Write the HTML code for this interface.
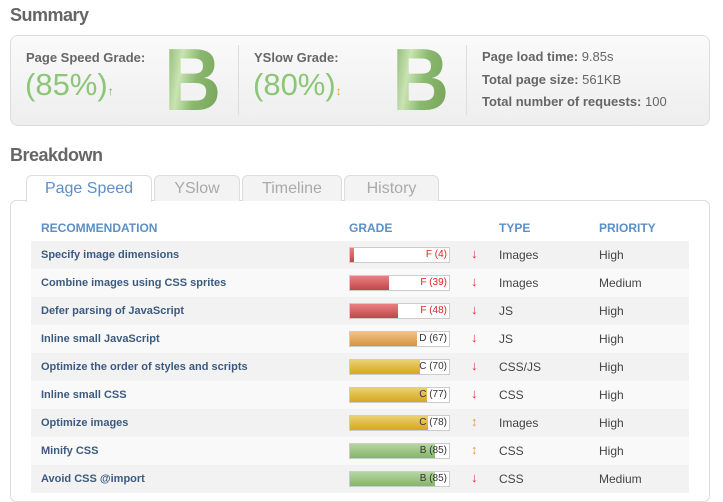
<!DOCTYPE html>
<html><head><style>
body{margin:0;width:723px;height:490px;overflow:hidden;background:#fff;font-family:"Liberation Sans",sans-serif;position:relative}
.a{position:absolute}
h2{position:absolute;margin:0;font-size:18px;font-weight:bold;color:#666;letter-spacing:-0.5px}
.box{left:10px;top:35px;width:698px;height:89px;border:1px solid #ddd;border-radius:8px;background:linear-gradient(#fafafa,#eeeeee)}
.lbl{font-size:13px;font-weight:bold;color:#666}
.pct{font-size:31px;color:#8cc677}
.big{font-size:88px;font-weight:bold;line-height:88px;transform:scaleX(0.9);transform-origin:left top;background:linear-gradient(100deg,#7fad63 0%,#c9e4b2 30%,#8ab86e 55%,#73a257 100%);-webkit-background-clip:text;color:transparent}
.div{width:1px;height:70px;background:#ddd;top:45px}
.st{font-size:13px;color:#666;left:482px}
.st b{color:#666}
.tab{top:175px;height:25px;border:1px solid #ddd;border-bottom:none;border-radius:6px 6px 0 0;background:#f3f3f3;color:#aaa;font-size:16px;text-align:center;line-height:26px}
.panel{left:10px;top:200px;width:698px;height:300px;border:1px solid #ddd;border-radius:6px}
.th{top:221px;font-size:12px;font-weight:bold;color:#5b8fc7}
.row{left:31px;width:658px;height:28px}
.rn{position:absolute;left:10px;top:8px;font-size:11px;font-weight:bold;color:#3c5a7e}
.bar{position:absolute;left:318px;top:6px;width:99px;height:14px;border:1px solid #ccc;background:#fff}
.fill{position:absolute;left:0;top:0;height:14px}
.g{position:absolute;right:2px;top:1px;font-size:10px}
.arr{position:absolute;left:440px;top:5px;font-size:13px;font-weight:bold}
.ty{position:absolute;left:468px;top:7px;font-size:12px;color:#444}
.pr{position:absolute;left:568px;top:7px;font-size:12px;color:#444}
</style></head><body>
<h2 style="left:10px;top:5px">Summary</h2>
<div class="a box"></div>
<div class="a lbl" style="left:26px;top:50px">Page Speed Grade:</div>
<div class="a pct" style="left:25px;top:67px">(85%)<span style="font-size:12px;font-weight:bold;color:#6aa55a">↑</span></div>
<div class="a big" style="left:164px;top:36px">B</div>
<div class="a div" style="left:238px"></div>
<div class="a lbl" style="left:254px;top:50px">YSlow Grade:</div>
<div class="a pct" style="left:253px;top:67px">(80%)<span style="font-size:12px;font-weight:bold;color:#e8a040">↕</span></div>
<div class="a big" style="left:392px;top:36px">B</div>
<div class="a div" style="left:466px"></div>
<div class="a st" style="top:49px"><b>Page load time:</b> 9.85s</div>
<div class="a st" style="top:72px"><b>Total page size:</b> 561KB</div>
<div class="a st" style="top:94px"><b>Total number of requests:</b> 100</div>
<h2 style="left:10px;top:145px">Breakdown</h2>
<div class="a panel"></div>
<div class="a tab" style="left:26px;width:124px;background:#fff;color:#5b8fc7;height:26px;z-index:2">Page Speed</div>
<div class="a tab" style="left:154px;width:84px">YSlow</div>
<div class="a tab" style="left:242px;width:98px">Timeline</div>
<div class="a tab" style="left:344px;width:93px">History</div>
<div class="a th" style="left:41px">RECOMMENDATION</div>
<div class="a th" style="left:349px">GRADE</div>
<div class="a th" style="left:499px">TYPE</div>
<div class="a th" style="left:599px">PRIORITY</div>

<div class="a row" style="top:241px;background:#f2f2f2"><span class="rn">Specify image dimensions</span><div class="bar"><div class="fill" style="width:4px;background:linear-gradient(#e98080,#c0474b)"></div><span class="g" style="color:#d22">F (4)</span></div><span class="arr" style="color:#d33">↓</span><span class="ty">Images</span><span class="pr">High</span></div>
<div class="a row" style="top:269px;background:#f9f9f9"><span class="rn">Combine images using CSS sprites</span><div class="bar"><div class="fill" style="width:39px;background:linear-gradient(#e98080,#c0474b)"></div><span class="g" style="color:#d22">F (39)</span></div><span class="arr" style="color:#d33">↓</span><span class="ty">Images</span><span class="pr">Medium</span></div>
<div class="a row" style="top:297px;background:#f2f2f2"><span class="rn">Defer parsing of JavaScript</span><div class="bar"><div class="fill" style="width:48px;background:linear-gradient(#e98080,#c0474b)"></div><span class="g" style="color:#d22">F (48)</span></div><span class="arr" style="color:#d33">↓</span><span class="ty">JS</span><span class="pr">High</span></div>
<div class="a row" style="top:325px;background:#f9f9f9"><span class="rn">Inline small JavaScript</span><div class="bar"><div class="fill" style="width:67px;background:linear-gradient(#f0c28a,#d8923e)"></div><span class="g" style="color:#333">D (67)</span></div><span class="arr" style="color:#d33">↓</span><span class="ty">JS</span><span class="pr">High</span></div>
<div class="a row" style="top:353px;background:#f2f2f2"><span class="rn">Optimize the order of styles and scripts</span><div class="bar"><div class="fill" style="width:70px;background:linear-gradient(#ecd070,#d3a820)"></div><span class="g" style="color:#333">C (70)</span></div><span class="arr" style="color:#d33">↓</span><span class="ty">CSS/JS</span><span class="pr">High</span></div>
<div class="a row" style="top:381px;background:#f9f9f9"><span class="rn">Inline small CSS</span><div class="bar"><div class="fill" style="width:77px;background:linear-gradient(#ecd070,#d3a820)"></div><span class="g" style="color:#333">C (77)</span></div><span class="arr" style="color:#d33">↓</span><span class="ty">CSS</span><span class="pr">High</span></div>
<div class="a row" style="top:409px;background:#f2f2f2"><span class="rn">Optimize images</span><div class="bar"><div class="fill" style="width:78px;background:linear-gradient(#ecd070,#d3a820)"></div><span class="g" style="color:#333">C (78)</span></div><span class="arr" style="color:#e8a040">↕</span><span class="ty">Images</span><span class="pr">High</span></div>
<div class="a row" style="top:437px;background:#f9f9f9"><span class="rn">Minify CSS</span><div class="bar"><div class="fill" style="width:85px;background:linear-gradient(#b5d6a0,#86b46c)"></div><span class="g" style="color:#333">B (85)</span></div><span class="arr" style="color:#e8a040">↕</span><span class="ty">CSS</span><span class="pr">High</span></div>
<div class="a row" style="top:465px;background:#f2f2f2"><span class="rn">Avoid CSS @import</span><div class="bar"><div class="fill" style="width:85px;background:linear-gradient(#b5d6a0,#86b46c)"></div><span class="g" style="color:#333">B (85)</span></div><span class="arr" style="color:#d33">↓</span><span class="ty">CSS</span><span class="pr">Medium</span></div>
</body></html>
